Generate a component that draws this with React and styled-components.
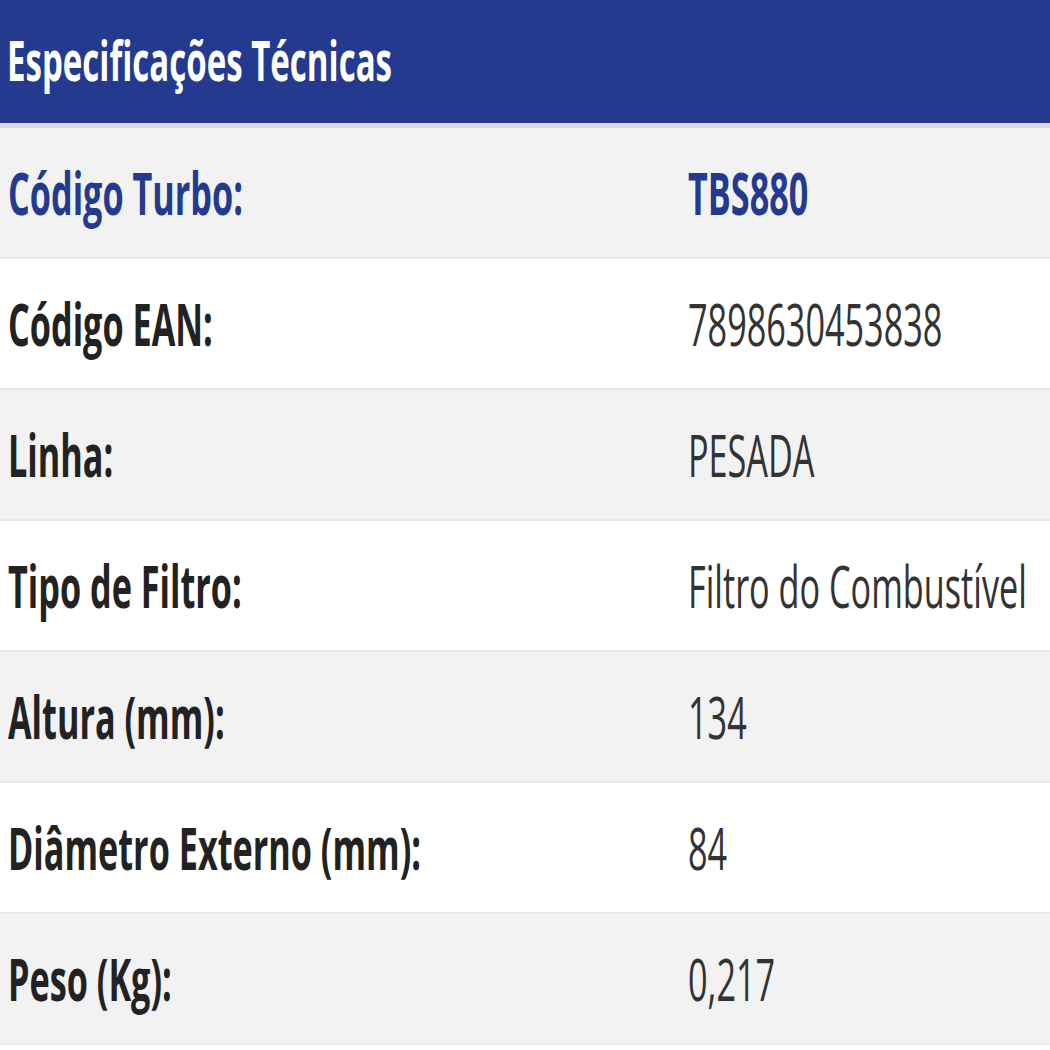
import React from 'react';
import styled, { createGlobalStyle } from 'styled-components';

const GlobalStyle = createGlobalStyle`
  html, body {
    margin: 0;
    padding: 0;
    background: #ffffff;
    overflow: hidden;
  }
  body {
    font-family: 'Open Sans', 'Noto Sans', 'Liberation Sans', sans-serif;
  }
`;

const specs = [
  { label: 'Código Turbo:', value: 'TBS880', highlight: true },
  { label: 'Código EAN:', value: '7898630453838' },
  { label: 'Linha:', value: 'PESADA' },
  { label: 'Tipo de Filtro:', value: 'Filtro do Combustível' },
  { label: 'Altura (mm):', value: '134' },
  { label: 'Diâmetro Externo (mm):', value: '84' },
  { label: 'Peso (Kg):', value: '0,217' },
];

const Table = styled.section`
  width: 1050px;
  overflow: hidden;
`;

const Header = styled.header`
  height: 117px;
  display: flex;
  align-items: center;
  padding: 0 7px 6px;
  background: #233a8f;
  border-bottom: 5px solid #d9dce6;
`;

const Text = styled.span`
  display: inline-block;
  white-space: nowrap;
  transform: scaleX(${(p) => p.squeeze || 0.58});
  transform-origin: left center;
  font-size: ${(p) => p.size || 59}px;
  font-weight: ${(p) => (p.bold ? 700 : 400)};
  color: ${(p) => p.color || '#333333'};
  line-height: 1;
`;

const Row = styled.div`
  height: 131px;
  box-sizing: border-box;
  display: grid;
  grid-template-columns: 680px 1fr;
  align-items: center;
  padding: 0 8px;
  background: ${(p) => (p.striped ? '#f2f2f2' : '#ffffff')};
  border-bottom: 2px solid #e8e8e8;
`;

const Cell = styled.div`
  min-width: 0;
`;

export default function App() {
  return (
    <>
      <GlobalStyle />
      <Table>
        <Header>
          <Text size={56} squeeze={0.59} bold color="#ffffff">
            Especificações Técnicas
          </Text>
        </Header>
        {specs.map((row, i) => (
          <Row key={row.label} striped={i % 2 === 0}>
            <Cell>
              <Text bold color={row.highlight ? '#233a8f' : '#222222'}>
                {row.label}
              </Text>
            </Cell>
            <Cell>
              <Text bold={row.highlight} color={row.highlight ? '#233a8f' : '#333333'}>
                {row.value}
              </Text>
            </Cell>
          </Row>
        ))}
      </Table>
    </>
  );
}
